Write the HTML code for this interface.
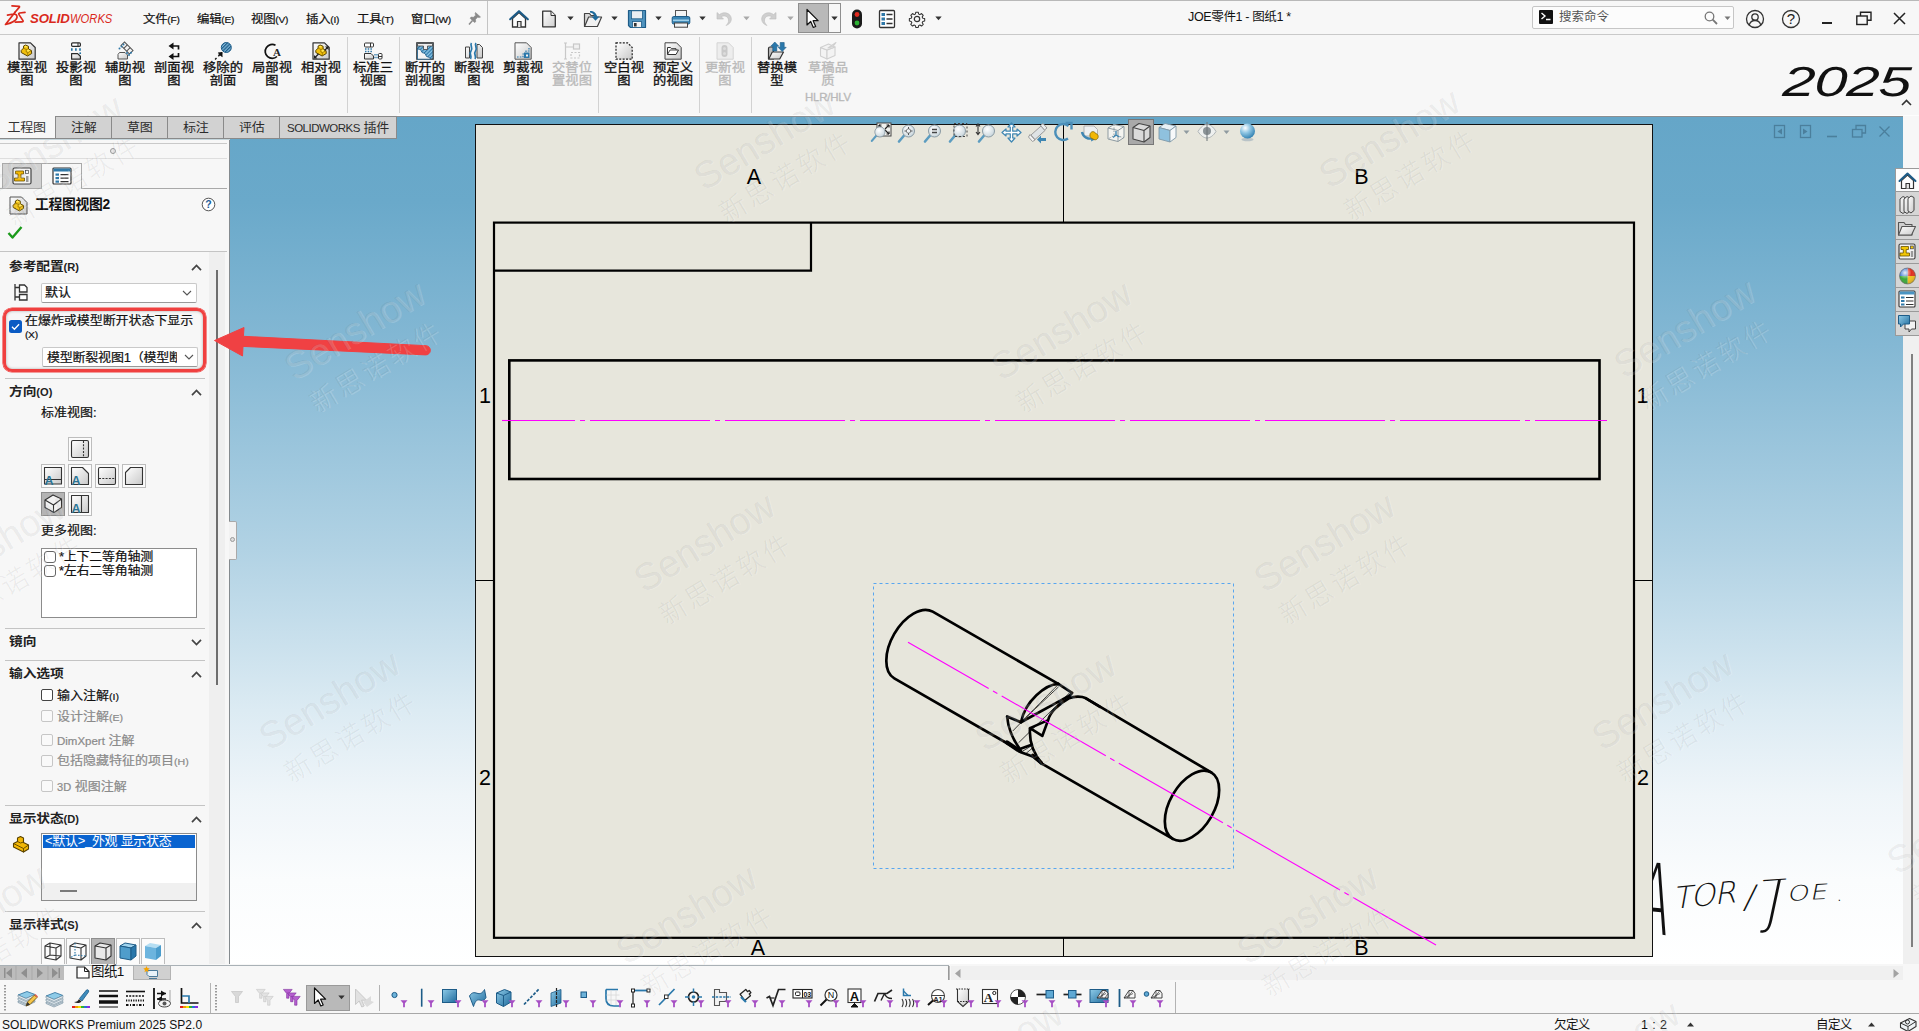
<!DOCTYPE html>
<html lang="zh-CN">
<head>
<meta charset="utf-8">
<title>JOE零件1 - 图纸1 *</title>
<style>
*{box-sizing:border-box;margin:0;padding:0}
html,body{width:1919px;height:1031px;overflow:hidden;background:#f7f7f7}
body{position:relative;font-family:"Liberation Sans","Noto Sans CJK SC",sans-serif;font-size:12px;color:#111;line-height:1}
.abs{position:absolute}
svg{display:block;overflow:visible}
svg.ico{position:absolute}
/* ---------- title bar ---------- */
#titlebar{position:absolute;left:0;top:0;width:1919px;height:35px;background:#f7f7f7;border-top:1px solid #b9b9b9;border-bottom:1px solid #c9c9c9}
#titlebar .menu{position:absolute;top:11px;font-size:11.6px;color:#111;white-space:nowrap;letter-spacing:-.25px;transform:scaleX(1.07);transform-origin:0 50%;margin-top:.5px;-webkit-text-stroke:.2px currentColor}
#titlebar .menu small{font-size:9.5px;letter-spacing:-.2px}
/* ---------- ribbon ---------- */
#ribbon{position:absolute;left:0;top:35px;width:1919px;height:82px;background:#f7f7f7}
.rb{position:absolute;top:27px;width:50px;text-align:center;font-size:12.2px;line-height:13px;color:#111;letter-spacing:0;white-space:nowrap;transform:scaleX(1.09);-webkit-text-stroke:.3px currentColor}
.rb.dis{color:#b9b9b9}
.rsep{position:absolute;top:2px;width:1px;height:76px;background:#d2d2d2}
/* ---------- cm tabs ---------- */
#tabs{position:absolute;left:0;top:116px;height:24px;width:1919px;z-index:5}
.tab{position:absolute;top:0;height:23px;border:1px solid #8a8a8a;border-left:none;background:#d2d2d2;font-size:13px;line-height:21px;text-align:center;color:#2b2b2b;letter-spacing:-.2px}
.tab.act{background:#f7f7f7;border:none;border-bottom:1px solid #8a8a8a;color:#333;line-height:23px;text-indent:-1px}
/* ---------- left panel ---------- */
#left{position:absolute;left:0;top:138px;width:230px;height:827px;background:#f7f7f7;border-right:1px solid #858b8f}
.sec{position:absolute;left:9px;font-size:12.4px;font-weight:bold;color:#222;letter-spacing:-.1px;white-space:nowrap;margin-top:-.5px;transform:scaleX(1.11);transform-origin:0 50%}
.sec small{font-size:10px;font-weight:bold;letter-spacing:0}
.hr{position:absolute;left:5px;width:200px;height:1px;background:#c4c4c4}
.chev{position:absolute;left:191px;width:11px;height:7px}
.lbl{position:absolute;font-size:12px;color:#111;white-space:nowrap;letter-spacing:0;transform:scaleX(1.083);transform-origin:0 50%;margin-top:.5px;-webkit-text-stroke:.2px currentColor}
.lbl.dis{color:#8a8a8a}
.cb{position:absolute;width:12px;height:12px;border:1px solid #444;border-radius:2px;background:#fff}
.cb.dis{border-color:#c6c6c6;background:#f9f9f9}
.sel{position:absolute;height:20px;background:#fff;border:1px solid #c9c9c9;border-bottom-color:#9a9a9a;border-radius:2px;font-size:12.5px;line-height:18px;padding-left:3px;white-space:nowrap;overflow:hidden;letter-spacing:-.3px}
.sx{display:inline-block;transform:scaleX(1.083);transform-origin:0 50%;font-size:12px;letter-spacing:0;-webkit-text-stroke:.2px currentColor}
.sxc{display:inline-block;transform:scaleX(1.083);transform-origin:50% 50%}
.vb{position:absolute;width:24px;height:24px;border:1px solid #bdbdbd;background:#fbfbfb}
.vb.on{background:#b4b4b4;border-color:#8e8e8e}
/* ---------- graphics ---------- */
#gfx{position:absolute;left:230px;top:117px;width:1673px;height:848px;background:linear-gradient(180deg,#65a6c8 0%,#6aa9ca 10%,#84b8d4 27%,#b1d2e4 51%,#dcebf3 70%,#eff5f9 80%,#fafcfd 90%,#ffffff 100%);overflow:hidden}
#sheet{position:absolute;left:0;top:0;width:1919px;height:1031px;pointer-events:none}
/* ---------- bottom ---------- */
#bottom{position:absolute;left:0;top:964px;width:1919px;height:67px;background:#f7f7f7}
#status{position:absolute;left:0;top:1013px;width:1919px;height:18px;border-top:1px solid #a8a8a8;background:#f7f7f7;font-size:12px}
.wm{position:absolute;white-space:nowrap;color:rgba(70,70,70,.085);transform:rotate(-31deg);transform-origin:0 34px;font-size:38px;line-height:34px;height:34px;pointer-events:none;font-weight:300;text-shadow:1px 1px 0 rgba(255,255,255,.18)}
.wm i{display:block;font-style:normal;font-size:27px;line-height:30px;padding-left:3px;letter-spacing:3px;margin-top:11px}
</style>
</head>
<body>
<!--TITLEBAR-->
<div id="titlebar">
  <!-- logo -->
  <svg class="ico" style="left:0;top:0" width="30" height="30" viewBox="0 0 30 30"><g fill="none" stroke="#da291c" stroke-width="1.700" stroke-linecap="round" stroke-linejoin="round"><path d="M12 4.800L19 5.300Q19.900 5.500 19.200 6.400L15 11.200"/><path d="M7.500 14.200L13.500 13Q17.400 13 17 16.500Q16 21 5.500 23.500L15 11.200"/><path d="M25 11.300L19.600 12Q18.200 12.400 19 13.600L23 19.600Q23.500 20.700 22 20.800L15.300 21.200"/></g></svg>
  <div class="abs" style="left:30px;top:11px;font-size:13.200px;font-style:italic;font-weight:bold;color:#da291c;white-space:nowrap;letter-spacing:-.1px">SOLID</div>
  <div class="abs" style="left:70px;top:11px;font-size:13.200px;font-style:italic;color:#da291c;white-space:nowrap;transform:scaleX(.85);transform-origin:0 0">WORKS</div>
  <div class="menu" style="left:143px">文件<small>(F)</small></div>
  <div class="menu" style="left:197px">编辑<small>(E)</small></div>
  <div class="menu" style="left:251px">视图<small>(V)</small></div>
  <div class="menu" style="left:306px">插入<small>(I)</small></div>
  <div class="menu" style="left:357px">工具<small>(T)</small></div>
  <div class="menu" style="left:411px">窗口<small>(W)</small></div>
  <!-- pin -->
  <svg class="ico" style="left:467px;top:9px" width="16" height="16" viewBox="0 0 16 16"><g fill="#8a8a8a" stroke="#8a8a8a" stroke-linejoin="round"><path d="M8.500 2.500l5 4.500-1.200.6-1.800-.4-2 2.300.2 2.300-1.200.7-4.300-4.200.8-1.200 2.400.2 2.200-2.100-.5-1.700z" stroke-width=".6"/><path d="M5.500 10.500l-3.500 4" stroke-width="1.500" fill="none"/></g></svg>
  <div class="abs" style="left:487px;top:0;width:1px;height:34px;background:#c4c4c4"></div>
  <!-- home -->
  <svg class="ico" style="left:509px;top:8px" width="20" height="20" viewBox="0 0 20 20"><path d="M3.500 9.500v8.500h13v-8.500l-6.500-6z" fill="#fdfdfd" stroke="#333" stroke-width="1.300"/><path d="M8.500 18v-5.500h3.500v5.500" fill="#e5e5e5" stroke="#333" stroke-width="1.200"/><path d="M1.200 10.200l8.800-8 8.800 8" fill="none" stroke="#1d5c88" stroke-width="2.200" stroke-linejoin="round" stroke-linecap="round"/></svg>
  <!-- new -->
  <svg class="ico" style="left:541px;top:8px" width="16" height="20" viewBox="0 0 16 20"><defs><linearGradient id="gdoc" x1="0" y1="0" x2="1" y2="1"><stop offset="0" stop-color="#fff"/><stop offset="1" stop-color="#cfcfcf"/></linearGradient></defs><path d="M1.700 2.200h8.300l4.300 4.300v11.300h-12.600z" fill="url(#gdoc)" stroke="#333" stroke-width="1.300" stroke-linejoin="round"/><path d="M10 2.200v4.300h4.300" fill="#eee" stroke="#333" stroke-width="1"/></svg>
  <svg class="ico" style="left:567px;top:15px" width="7" height="5" viewBox="0 0 7 5"><path d="M.3.500h6.400l-3.200 3.800z" fill="#333"/></svg>
  <!-- open -->
  <svg class="ico" style="left:583px;top:8px" width="21" height="20" viewBox="0 0 21 20"><path d="M1.500 4.500h5l1.500 2h5v11h-11.500z" fill="#d9d9d9" stroke="#444" stroke-width="1.200" stroke-linejoin="round"/><path d="M1.600 17.500l4-9.500h13l-4.200 9.500z" fill="#f1f1f1" stroke="#444" stroke-width="1.200" stroke-linejoin="round"/><path d="M7 2c4 0 6.500 2 6.800 5.500h2.700l-4 4.300-4-4.300h2.700c-.2-2-1.700-3.500-4.200-3.900z" fill="#1f6b9c"/></svg>
  <svg class="ico" style="left:611px;top:15px" width="7" height="5" viewBox="0 0 7 5"><path d="M.3.500h6.400l-3.200 3.800z" fill="#333"/></svg>
  <!-- save -->
  <svg class="ico" style="left:627px;top:8px" width="20" height="20" viewBox="0 0 20 20"><path d="M1.500 1.500h17v17h-15l-2-2z" fill="#4f93be" stroke="#1d5c88" stroke-width="1.200" stroke-linejoin="round"/><rect x="4.500" y="1.800" width="11" height="8" fill="#e9eef2" stroke="#1d5c88" stroke-width=".8"/><rect x="5.500" y="12.500" width="9" height="6" fill="#f2f2f2" stroke="#1d5c88" stroke-width=".8"/><rect x="7" y="14" width="2.600" height="3.500" fill="#333"/></svg>
  <svg class="ico" style="left:655px;top:15px" width="7" height="5" viewBox="0 0 7 5"><path d="M.3.500h6.400l-3.200 3.800z" fill="#333"/></svg>
  <!-- print -->
  <svg class="ico" style="left:671px;top:8px" width="20" height="20" viewBox="0 0 20 20"><rect x="4.500" y="1.500" width="11" height="7" fill="#f4f4f4" stroke="#555" stroke-width="1"/><rect x="1.200" y="7.500" width="17.600" height="7.500" rx="1.500" fill="#3c86b5" stroke="#1d5c88" stroke-width="1"/><rect x="2" y="10.500" width="16" height="1.600" fill="#9fd0ea"/><rect x="3.500" y="14" width="13" height="4.200" fill="#f4f4f4" stroke="#444" stroke-width="1"/></svg>
  <svg class="ico" style="left:699px;top:15px" width="7" height="5" viewBox="0 0 7 5"><path d="M.3.500h6.400l-3.200 3.800z" fill="#333"/></svg>
  <!-- undo -->
  <svg class="ico" style="left:715px;top:9px" width="19" height="18" viewBox="0 0 19 18"><path d="M2 2.500v6.500h6.500l-2.300-2.300c2.800-1.700 6.800-.6 7.300 3.200.3 2.200-.8 4.200-2.500 5.600 3.800-1.300 5.800-4.300 5.200-7.600-.9-5-7.300-6.800-11.800-3.300z" fill="#cfcfcf" stroke="#bdbdbd" stroke-width=".6"/></svg>
  <svg class="ico" style="left:743px;top:15px" width="7" height="5" viewBox="0 0 7 5"><path d="M.3.500h6.400l-3.200 3.800z" fill="#a9a9a9"/></svg>
  <!-- redo -->
  <svg class="ico" style="left:759px;top:9px" width="19" height="18" viewBox="0 0 19 18"><path transform="translate(19 0) scale(-1 1)" d="M2 2.500v6.500h6.500l-2.300-2.300c2.800-1.700 6.800-.6 7.300 3.200.3 2.200-.8 4.200-2.500 5.600 3.800-1.300 5.800-4.300 5.200-7.600-.9-5-7.300-6.800-11.800-3.300z" fill="#cfcfcf" stroke="#bdbdbd" stroke-width=".6"/></svg>
  <svg class="ico" style="left:787px;top:15px" width="7" height="5" viewBox="0 0 7 5"><path d="M.3.500h6.400l-3.200 3.800z" fill="#a9a9a9"/></svg>
  <!-- select -->
  <div class="abs" style="left:798px;top:2px;width:43px;height:30px;border:1px solid #8f8f8f;background:#f7f7f7"></div>
  <div class="abs" style="left:798px;top:2px;width:31px;height:30px;border:1px solid #8f8f8f;background:#b9b9b9"></div>
  <svg class="ico" style="left:805px;top:7px" width="16" height="21" viewBox="0 0 16 21"><path d="M2 1.500v15.500l3.700-3.500 2.600 6 2.400-1-2.600-5.800h5z" fill="#fff" stroke="#111" stroke-width="1.200" stroke-linejoin="round"/></svg>
  <svg class="ico" style="left:831px;top:15px" width="7" height="5" viewBox="0 0 7 5"><path d="M.3.500h6.400l-3.200 3.800z" fill="#333"/></svg>
  <!-- traffic light -->
  <svg class="ico" style="left:851px;top:8px" width="12" height="20" viewBox="0 0 12 20"><rect x="1" y=".5" width="10" height="19" rx="5" fill="#1b1b1b"/><circle cx="6" cy="5.500" r="2.400" fill="#e02a1f"/><circle cx="6" cy="14" r="2.400" fill="#2cb233"/></svg>
  <!-- options list -->
  <svg class="ico" style="left:878px;top:8px" width="18" height="20" viewBox="0 0 18 20"><rect x="1.500" y="1.500" width="15" height="17" rx="1" fill="#fff" stroke="#333" stroke-width="1.300"/><g fill="#2f78a8"><rect x="3.500" y="4" width="3.500" height="3"/><rect x="3.500" y="8.500" width="3.500" height="3"/><rect x="3.500" y="13" width="3.500" height="3"/></g><path d="M8.500 5.500h6M8.500 10h6M8.500 14.500h6" stroke="#333" stroke-width="1.300"/></svg>
  <!-- gear -->
  <svg class="ico" style="left:908px;top:9px" width="18" height="18" viewBox="0 0 18 18"><g fill="none" stroke="#333" stroke-width="1.200" stroke-linejoin="round"><path d="M7.600 1.200h2.800l.4 2.100 1.500.7 1.800-1.200 2 2-1.200 1.800.7 1.500 2.100.4v2.800l-2.100.4-.7 1.500 1.200 1.800-2 2-1.800-1.200-1.500.7-.4 2.100h-2.800l-.4-2.100-1.500-.7-1.800 1.200-2-2 1.200-1.800-.7-1.500-2.100-.4v-2.800l2.100-.4.7-1.500-1.200-1.800 2-2 1.800 1.200 1.500-.7z" transform="translate(1.100 1.100) scale(.88)"/><circle cx="9" cy="9" r="2.700"/></g></svg>
  <svg class="ico" style="left:935px;top:15px" width="7" height="5" viewBox="0 0 7 5"><path d="M.3.500h6.400l-3.200 3.800z" fill="#333"/></svg>
  <!-- doc title -->
  <div class="abs" style="left:1188px;top:10px;font-size:12.5px;white-space:nowrap;color:#111;letter-spacing:-.35px">JOE零件1 - 图纸1 *</div>
  <!-- search -->
  <div class="abs" style="left:1532px;top:5px;width:202px;height:23px;border:1px solid #c6c6c6;border-radius:2px;background:#fcfcfc"></div>
  <div class="abs" style="left:1539px;top:9px;width:14px;height:14px;background:#111;border-radius:1px"></div>
  <svg class="ico" style="left:1540px;top:10px" width="12" height="11" viewBox="0 0 12 11"><path d="M1.500 2l3.500 3-3.500 3M6 8.500h4.500" fill="none" stroke="#fff" stroke-width="1.400"/></svg>
  <div class="abs" style="left:1559px;top:10px;font-size:12.500px;color:#555;white-space:nowrap">搜索命令</div>
  <svg class="ico" style="left:1703px;top:9px" width="16" height="16" viewBox="0 0 16 16"><circle cx="6.500" cy="6.500" r="4.300" fill="none" stroke="#777" stroke-width="1.300"/><path d="M9.700 9.700l4.300 4.300" stroke="#777" stroke-width="1.800"/></svg>
  <svg class="ico" style="left:1724px;top:15px" width="7" height="5" viewBox="0 0 7 5"><path d="M.5.500h6l-3 3.500z" fill="#777"/></svg>
  <!-- user / help / window -->
  <svg class="ico" style="left:1745px;top:8px" width="20" height="20" viewBox="0 0 20 20"><g fill="none" stroke="#333" stroke-width="1.300"><circle cx="10" cy="10" r="8.500"/><circle cx="10" cy="8" r="3.200"/><path d="M4.200 16.200c.8-3 3-4.700 5.800-4.700s5 1.700 5.800 4.700"/></g></svg>
  <svg class="ico" style="left:1781px;top:8px" width="20" height="20" viewBox="0 0 20 20"><circle cx="10" cy="10" r="8.500" fill="none" stroke="#333" stroke-width="1.300"/><text x="10" y="15.300" font-size="15" font-family="'Liberation Sans',sans-serif" text-anchor="middle" fill="#222">?</text></svg>
  <div class="abs" style="left:1822px;top:21px;width:10px;height:2px;background:#222"></div>
  <svg class="ico" style="left:1856px;top:10px" width="16" height="15" viewBox="0 0 16 15"><g fill="none" stroke="#222" stroke-width="1.400"><path d="M4.500 5v-3.800h10.500v8h-3.800"/><rect x=".8" y="5" width="10.400" height="8.500"/></g></svg>
  <svg class="ico" style="left:1893px;top:11px" width="13" height="13" viewBox="0 0 13 13"><path d="M1 1l11 11M12 1l-11 11" stroke="#222" stroke-width="1.500"/></svg>
</div>
<!--/TITLEBAR-->
<!--RIBBON-->
<div id="ribbon">
  <svg width="0" height="0" style="position:absolute"><defs>
    <linearGradient id="gpg" x1="0" y1="0" x2="1" y2="1"><stop offset="0" stop-color="#ffffff"/><stop offset="1" stop-color="#c9c9c9"/></linearGradient>
    <linearGradient id="gbl" x1="0" y1="0" x2="1" y2="1"><stop offset="0" stop-color="#8ecbe8"/><stop offset="1" stop-color="#1f6b9c"/></linearGradient>
    <g id="ypart"><path d="M.3 5.800L2.600 3.400V1.400L4.600.300L7.600 1.600V4.300L10.500 5.800L10.800 8.800L6.600 11.300L.3 7.800z" fill="#f2c00c" stroke="#5a4500" stroke-width="1" stroke-linejoin="round"/><path d="M2.600 3.400L5.300 4.800L7.600 4.300M5.300 4.800V7.200L6.800 8L10.500 5.800M6.800 8V11" fill="none" stroke="#8a6a00" stroke-width=".7"/><path d="M3.200 1.700L4.600 1L6.800 2L5.300 2.800zM5.900 5.300L7.600 4.900L9.300 5.800L7 7.200z" fill="#ffe85a"/></g>
  </defs></svg>
  <!-- 1 模型视图 -->
  <svg class="ico" style="left:18px;top:7px" width="18" height="18" viewBox="0 0 18 18"><path d="M1 .8h11.500l4.700 4.700v11.700h-16.200z" fill="url(#gpg)" stroke="#333" stroke-width="1.200" stroke-linejoin="round"/><use href="#ypart" x="2.900" y="2.700"/></svg>
  <div class="rb" style="left:2px">模型视<br>图</div>
  <!-- 2 投影视图 -->
  <svg class="ico" style="left:67px;top:7px" width="18" height="18" viewBox="0 0 18 18"><rect x="4.600" y=".900" width="8.800" height="3.400" rx="1" fill="#fff" stroke="#2b2b2b" stroke-width="1.200"/><path d="M11 .900v3.400" stroke="#2b2b2b" stroke-width="1"/><path d="M4 7.500h10" stroke="#1f6f9f" stroke-width="2.600" stroke-dasharray="1.600 2.500"/><circle cx="13.200" cy="11.200" r=".9" fill="#1f6f9f"/><path d="M4.600 11.600h6l2.800 2.600v3h-8.800z" fill="url(#gpg)" stroke="#2b2b2b" stroke-width="1.200" stroke-linejoin="round"/></svg>
  <div class="rb" style="left:51px">投影视<br>图</div>
  <!-- 3 辅助视图 -->
  <svg class="ico" style="left:116px;top:7px" width="18" height="18" viewBox="0 0 18 18"><g transform="rotate(45 11 6)"><rect x="5" y="3.500" width="12" height="5" fill="#f3f3f3" stroke="#555" stroke-width="1"/><path d="M9 3.500v5M13 3.500v5" stroke="#555" stroke-width="1"/></g><path d="M2 12.500l1.500-2h5.500l2.500 2.500v4h-9.500z" fill="url(#gpg)" stroke="#555" stroke-width="1"/><g fill="#2f78a8"><circle cx="3.500" cy="6.500" r="1"/><circle cx="5.500" cy="4.500" r="1"/><circle cx="7.500" cy="2.500" r="1"/><circle cx="11" cy="11" r="1"/><circle cx="13" cy="13" r="1"/><circle cx="15" cy="10.800" r="1"/></g></svg>
  <div class="rb" style="left:100px">辅助视<br>图</div>
  <!-- 4 剖面视图 -->
  <svg class="ico" style="left:165px;top:7px" width="18" height="18" viewBox="0 0 18 18"><g fill="none" stroke="#111" stroke-width="1.700"><path d="M8 4h5.500v3.500M13.500 11v3.500h-5.500"/></g><path d="M3.500 4l5-3.500v7zM3.500 14.500l5-3.500v7z" fill="#111"/></svg>
  <div class="rb" style="left:149px">剖面视<br>图</div>
  <!-- 5 移除的剖面 -->
  <svg class="ico" style="left:214px;top:7px" width="18" height="18" viewBox="0 0 18 18"><defs><pattern id="hat" width="2.400" height="2.400" patternUnits="userSpaceOnUse" patternTransform="rotate(45)"><rect width="2.400" height="2.400" fill="#7fb6d8"/><rect width="1.200" height="2.400" fill="#1d5c88"/></pattern></defs><circle cx="12.300" cy="5.500" r="5" fill="url(#hat)" stroke="#1d5c88" stroke-width="1"/><path d="M7.500 11v4.500l-4.200-.3z" fill="#111" transform="rotate(-100 6 13)"/><path d="M8 10.500l-4 4M2.500 16l-1.500 1.500" stroke="#111" stroke-width="1.400" stroke-dasharray="2 1.200"/><path d="M8.500 10l-4.700.6 4.100 4.100z" fill="#111"/></svg>
  <div class="rb" style="left:198px">移除的<br>剖面</div>
  <!-- 6 局部视图 -->
  <svg class="ico" style="left:262px;top:7px" width="20" height="18" viewBox="0 0 20 18"><path d="M13.500 3.200a7 7 0 1 0 1.500 11.300" fill="none" stroke="#111" stroke-width="1.700"/><text x="15" y="13.500" font-family="'Liberation Serif',serif" font-size="11" font-weight="bold" text-anchor="middle" fill="#222">A</text></svg>
  <div class="rb" style="left:247px">局部视<br>图</div>
  <!-- 7 相对视图 -->
  <svg class="ico" style="left:312px;top:7px" width="18" height="18" viewBox="0 0 18 18"><path d="M1 .8h11.500l4.700 4.700v11.700h-16.200z" fill="url(#gpg)" stroke="#333" stroke-width="1.200" stroke-linejoin="round"/><use href="#ypart" x="3.500" y="2.700"/><path d="M2.500 16l4-4M16 5l-3.500 3.500" stroke="#222" stroke-width="1.200"/><path d="M2 16.500v-3.500l3.500 3.500zM16.500 4.500v3.500l-3.500-3.500z" fill="#222"/></svg>
  <div class="rb" style="left:296px">相对视<br>图</div>
  <div class="rsep" style="left:347px"></div>
  <!-- 8 标准三视图 -->
  <svg class="ico" style="left:363px;top:7px" width="20" height="18" viewBox="0 0 20 18"><rect x="1.500" y="1" width="9" height="4" rx="1" fill="#fff" stroke="#333" stroke-width="1"/><path d="M7.500 1v4" stroke="#333"/><path d="M2 7h8M2 9.500h8" stroke="#2f78a8" stroke-width="1.300" stroke-dasharray="1.500 1.200"/><path d="M1.500 11.500h6.500l2.500 2.500v3h-9z" fill="url(#gpg)" stroke="#333" stroke-width="1"/><path d="M12 12v5M14 12v5" stroke="#2f78a8" stroke-width="1.300" stroke-dasharray="1.500 1.200"/><rect x="15.500" y="11.500" width="3.500" height="5.500" rx="1" fill="#fff" stroke="#333" stroke-width="1"/><path d="M15.500 14.500h3.500" stroke="#333"/></svg>
  <div class="rb" style="left:348px">标准三<br>视图</div>
  <div class="rsep" style="left:399px"></div>
  <!-- 9 断开的剖视图 -->
  <svg class="ico" style="left:416px;top:7px" width="18" height="18" viewBox="0 0 18 18"><defs><pattern id="hat2" width="2.600" height="2.600" patternUnits="userSpaceOnUse" patternTransform="rotate(45)"><rect width="2.600" height="2.600" fill="#8cc6e6"/><rect width="1.200" height="2.600" fill="#2f78a8"/></pattern></defs><rect x=".8" y=".8" width="16.400" height="16.400" fill="url(#hat2)" stroke="#333" stroke-width="1.200"/><path d="M1.500 1.500h15v2.500h-5v3.500h-4v-3.500h-6z" fill="#eee" stroke="#444" stroke-width=".8"/><path d="M1.500 7l3 .5 1.500 3 3 1 1.500 3 3 1 1 1.700h-13z" fill="#f4f4f4" stroke="#1d5c88" stroke-width=".8"/></svg>
  <div class="rb" style="left:400px">断开的<br>剖视图</div>
  <!-- 10 断裂视图 -->
  <svg class="ico" style="left:464px;top:7px" width="20" height="18" viewBox="0 0 20 18"><path d="M1.500 5h4v11h-4zM13 2.500h2.500l3 3v10.500h-5.500z" fill="url(#gpg)" stroke="#444" stroke-width="1"/><path d="M7.500 1c-2 2.500 2 5-.5 8s1.500 5-.5 8M12 1c-2 2.500 2 5-.5 8s1.500 5-.5 8" fill="none" stroke="#2a78ab" stroke-width="1.700"/></svg>
  <div class="rb" style="left:449px">断裂视<br>图</div>
  <!-- 11 剪裁视图 -->
  <svg class="ico" style="left:514px;top:7px" width="18" height="18" viewBox="0 0 18 18"><path d="M1 .8h11.500l4.700 4.700v11.700h-16.200z" fill="url(#gpg)" stroke="#555" stroke-width="1"/><path d="M3 15h6v-3h3v-3h3v-3" fill="none" stroke="#2a78ab" stroke-width="1.200" stroke-dasharray="1.600 1.200"/><path d="M10 10.500h5.500v5.500h-5.500z" fill="#2a78ab"/><path d="M12 12.500h2v2h-2z" fill="#f4f4f4"/></svg>
  <div class="rb" style="left:498px">剪裁视<br>图</div>
  <!-- 12 交替位置视图 -->
  <svg class="ico" style="left:563px;top:7px" width="18" height="18" viewBox="0 0 18 18"><g fill="none" stroke="#c8c8c8" stroke-width="1.200"><path d="M2.500 1v16M1 1h3M1 17h3M2.500 5h8"/><rect x="10.500" y="2" width="6" height="5" fill="#f1f1f1"/><rect x="8" y="10.500" width="8.500" height="5.500" stroke-dasharray="2 1.500"/></g></svg>
  <div class="rb dis" style="left:547px">交替位<br>置视图</div>
  <div class="rsep" style="left:598px"></div>
  <!-- 13 空白视图 -->
  <svg class="ico" style="left:615px;top:7px" width="18" height="18" viewBox="0 0 18 18"><path d="M1 .8h11.500l4.700 4.700v11.700h-16.200z" fill="url(#gpg)" stroke="#222" stroke-width="1.200" stroke-dasharray="2 1.400"/></svg>
  <div class="rb" style="left:599px">空白视<br>图</div>
  <!-- 14 预定义的视图 -->
  <svg class="ico" style="left:664px;top:7px" width="18" height="18" viewBox="0 0 18 18"><path d="M1 .8h11.500l4.700 4.700v11.700h-16.200z" fill="url(#gpg)" stroke="#444" stroke-width="1"/><path d="M3.500 5.500h3l1 1.200h4.500v1.300h2.500l-2.500 4.500h-8.500z" fill="#fff" stroke="#333" stroke-width="1" stroke-linejoin="round"/><path d="M3.600 12.300l2.400-4.300h6" fill="none" stroke="#333" stroke-width=".9"/></svg>
  <div class="rb" style="left:648px">预定义<br>的视图</div>
  <div class="rsep" style="left:699px"></div>
  <!-- 15 更新视图 -->
  <svg class="ico" style="left:716px;top:7px" width="18" height="18" viewBox="0 0 18 18"><path d="M1 .8h11.500l4.700 4.700v11.700h-16.200z" fill="#ededed" stroke="#d4d4d4" stroke-width="1"/><rect x="5.500" y="3" width="6" height="12" rx="3" fill="#c9c9c9"/><circle cx="8.500" cy="6.500" r="1.500" fill="#dcdcdc"/><circle cx="8.500" cy="11.500" r="1.500" fill="#dcdcdc"/></svg>
  <div class="rb dis" style="left:700px">更新视<br>图</div>
  <div class="rsep" style="left:751px"></div>
  <!-- 16 替换模型 -->
  <svg class="ico" style="left:767px;top:7px" width="20" height="18" viewBox="0 0 20 18"><path d="M1.500 6.500c0-1 .5-1.500 1.500-1.500h3.500v12h-5z" fill="#bdbdbd" stroke="#333" stroke-width="1.200" stroke-linejoin="round"/><path d="M1.800 17l3.500-7h11.200l-3.800 7z" fill="url(#gpg)" stroke="#333" stroke-width="1.200" stroke-linejoin="round"/><path d="M7.800 0l4 4.200h-2v4.800h-4v-4.800h-2zM15.200 9.500l-4-4.200h2v-4.800h4v4.800h2z" fill="#2a78ab" stroke="#1d5c88" stroke-width=".6"/></svg>
  <div class="rb" style="left:752px">替换模<br>型</div>
  <!-- 17 草稿品质 -->
  <svg class="ico" style="left:819px;top:7px" width="18" height="18" viewBox="0 0 18 18"><g fill="#f3f3f3" stroke="#d0d0d0" stroke-width="1.100" stroke-linejoin="round"><path d="M1.500 5.500l6.500 2.500v9l-6.500-3z"/><path d="M8 8l8-3v8.500l-8 3.500z"/><path d="M1.500 5.500l8-3.500 6.500 3-8 3z"/><path d="M9 6l8-5.500-3 4z" fill="#e4e4e4"/></g></svg>
  <div class="rb dis" style="left:803px">草稿品<br>质<div style="font-size:10.500px;margin-top:3px;letter-spacing:-.2px;white-space:nowrap;margin-left:-4px;margin-right:-4px">HLR/HLV</div></div>
  <!-- 2025 -->
  <svg class="ico" style="left:1770px;top:20px" width="150" height="60" viewBox="0 0 150 60"><text x="0" y="0" font-family="'Liberation Sans',sans-serif" font-style="italic" font-size="42" fill="#111" transform="translate(12 40.500) skewX(-3) scale(1.4 1)" letter-spacing="-.5">2025</text></svg>
  <svg class="ico" style="left:1901px;top:64px" width="11" height="7" viewBox="0 0 11 7"><path d="M1 6l4.500-4.500l4.500 4.500" fill="none" stroke="#333" stroke-width="1.600"/></svg>
</div>
<!--/RIBBON-->
<!--TABS-->
<!--/LEFT-->
<!--GFX-->
<div id="gfx"></div>
<svg id="sheet" class="abs" width="1919" height="1031" viewBox="0 0 1919 1031">
  <!-- handwritten signature behind sheet -->
  <g fill="#111" font-family="'DejaVu Sans','Liberation Sans',sans-serif" font-weight="200">
    <text font-size="98" transform="translate(1630 932) rotate(5) skewX(-3) scale(.56 1)">A</text>
    <text font-size="30" transform="translate(1673 909) rotate(-6) skewX(-16) scale(1.05 1)" letter-spacing="-1">TOR</text>
    <text font-size="33" transform="translate(1743 908) rotate(2) skewX(-8)">/</text>
    <text font-size="60" transform="translate(1762 922) rotate(6) skewX(-6) scale(.95 1)">J</text>
    <text font-size="30" transform="translate(1761 889) rotate(-4) scale(1.9 1)">–</text>
    <text font-size="21" transform="translate(1787 901) rotate(-3) skewX(-14) scale(1.3 1)" letter-spacing="1">OE</text>
    <text font-size="21" transform="translate(1836 901)">.</text>
  </g>
  <!-- sheet -->
  <rect x="475.5" y="124.5" width="1177" height="832" fill="#e7e6dc" stroke="#111" stroke-width="1"/>
  <g fill="none" stroke="#000" stroke-width="2.2">
    <rect x="494" y="222.6" width="1140" height="715.2"/>
    <path d="M494 270.6H811V222.6"/>
  </g>
  <g stroke="#000" stroke-width="1">
    <path d="M1063.5 124V222M1063.5 938V956M475 580.5H494M1634 580.5H1652"/>
  </g>
  <g font-family="'Liberation Sans',sans-serif" font-size="21.500" fill="#000" text-anchor="middle">
    <text x="754" y="184">A</text><text x="1361.5" y="184">B</text>
    <text x="758" y="955">A</text><text x="1361.5" y="955">B</text>
    <text x="485" y="403">1</text><text x="1642.5" y="403">1</text>
    <text x="485" y="785">2</text><text x="1643" y="785">2</text>
  </g>
  <!-- view 1 -->
  <rect x="509.3" y="360.4" width="1090.2" height="118.6" fill="none" stroke="#000" stroke-width="2.6"/>
  <path d="M502 420.5H1607" stroke="#ff00ff" stroke-width="1.1" stroke-dasharray="120 5 5 5" stroke-dashoffset="47" fill="none"/>
  <!-- view 2 -->
  <rect x="873.5" y="583.5" width="360" height="285" fill="none" stroke="#58a6f0" stroke-width="1" stroke-dasharray="3 3"/>
  <g fill="none" stroke="#000" stroke-width="2.700" stroke-linecap="round" stroke-linejoin="round">
    <!-- left piece -->
    <path d="M1058.3 683.9L932.7 611.7A38.4 22.2 -60 0 0 894.3 678.3L1017 749"/>
    <!-- right piece -->
    <path d="M1086 698.4L1211.2 772.4M1042.3 763.9L1172.8 838.9"/>
    <ellipse cx="1192" cy="805.7" rx="38.4" ry="22.2" transform="rotate(-60 1192 805.7)"/>
  </g>
  <g transform="translate(990 670) scale(0.10669)" fill="none" stroke="#000" stroke-width="25" stroke-linecap="round" stroke-linejoin="round">
    <path d="M640 130L770 215L745 245"/>
    <path d="M640 130C520 135 330 290 290 490L160 435C170 540 220 660 280 740L390 700"/>
    <path d="M290 490L745 240"/>
    <path d="M1031 345L900 265C860 245 790 245 740 265C640 320 560 400 545 470L375 545L490 618L545 470"/>
    <path d="M375 545C365 680 420 800 490 880L400 810L290 770"/>
    <path d="M160 680L280 760" stroke-width="40"/>
    <path d="M400 800L480 870" stroke-width="34"/>
    <g stroke-width="7"><path d="M215 570L640 135M270 680L745 215M290 770L390 710M340 780L400 730M300 480L640 160"/></g>
  </g>
  <path d="M908 642.3L1436 945" stroke="#ff00ff" stroke-width="1.1" stroke-dasharray="120 5 5 5" stroke-dashoffset="27" fill="none"/>
</svg>
<!--/SHEET-->
<!--LEFT-->
<div id="tabs">
  <div class="tab act" style="left:0;width:55px"><span class="sxc" style="font-size:12px">工程图</span></div>
  <div class="abs" style="left:397px;top:0;width:1506px;height:1px;background:#8b8f92"></div><div class="abs" style="left:397px;top:-1px;width:1522px;height:1px;background:#fdfdfd"></div><div class="abs" style="left:0;top:23px;width:230px;height:1px;background:#c5d6dc"></div>
  <div class="tab" style="left:55px;width:57px;border-left:1px solid #8a8a8a"><span class="sxc" style="font-size:12px">注解</span></div>
  <div class="tab" style="left:112px;width:56px"><span class="sxc" style="font-size:12px">草图</span></div>
  <div class="tab" style="left:168px;width:56px"><span class="sxc" style="font-size:12px">标注</span></div>
  <div class="tab" style="left:224px;width:56px"><span class="sxc" style="font-size:12px">评估</span></div>
  <div class="tab" style="left:280px;width:117px;letter-spacing:-.2px"><span style="font-size:11.500px;letter-spacing:-.5px">SOLIDWORKS</span> 插件</div>
</div>
<div id="left">
  <svg width="0" height="0" style="position:absolute"><defs>
    <path id="chu" d="M1 6.200l4.500-4.700l4.500 4.700" fill="none" stroke="#444" stroke-width="1.700"/>
    <path id="chd" d="M1 .8l4.500 4.700l4.500-4.700" fill="none" stroke="#444" stroke-width="1.700"/>
  </defs></svg>
  <div class="abs" style="left:0;top:5px;width:227px;height:1px;background:#c9c9c9"></div><div class="abs" style="left:0;top:20px;width:227px;height:1px;background:#dedede"></div>
  <div class="abs" style="left:110px;top:10px;width:6px;height:6px;border:1px solid #999;border-radius:50%;background:#e8e8e8"></div>
  <!-- manager tabs -->
  <div class="abs" style="left:2px;top:25px;width:39px;height:26px;background:#d2d2d2;border:1px solid #a9a9a9;border-right:none"></div><div class="abs" style="left:0;top:50px;width:2px;height:1px;background:#a9a9a9"></div>
  <div class="abs" style="left:41px;top:25px;width:41px;height:26px;background:#f7f7f7;border:1px solid #a9a9a9;border-bottom:none"></div>
  <div class="abs" style="left:82px;top:50px;width:145px;height:1px;background:#a9a9a9"></div>
  <svg class="ico" style="left:12px;top:29px" width="20" height="18" viewBox="0 0 20 18"><rect x="1" y="1" width="18" height="16" rx="1.500" fill="#f4f4f4" stroke="#444" stroke-width="1.200"/><path d="M3.500 4h8v3h-2.500v4h3.500v3h-10v-3h3.500v-4h-2.500z" fill="#f2b705" stroke="#6b5200" stroke-width=".8"/><rect x="13.500" y="3.500" width="3" height="3" fill="#fff" stroke="#444" stroke-width=".8"/><rect x="14" y="9" width="2.500" height="6" fill="#9a9a9a"/></svg>
  <svg class="ico" style="left:52px;top:29px" width="20" height="18" viewBox="0 0 20 18"><rect x="1" y="1" width="18" height="16" rx="1" fill="#fff" stroke="#333" stroke-width="1.200"/><rect x="1.500" y="1.500" width="17" height="3" fill="#2f78a8"/><g fill="#2f78a8"><rect x="3.500" y="6.500" width="3.500" height="2.200"/><rect x="3.500" y="10" width="3.500" height="2.200"/><rect x="3.500" y="13.500" width="3.500" height="2.200"/></g><path d="M8.500 7.600h8M8.500 11.100h8M8.500 14.600h8" stroke="#333" stroke-width="1.200"/></svg>
  <!-- header -->
  <svg class="ico" style="left:9px;top:58px" width="19" height="19" viewBox="0 0 19 19"><path d="M1 1h11.500l5.500 5.500v11.500h-17z" fill="url(#gpg)" stroke="#555" stroke-width="1"/><use href="#ypart" x="3.800" y="3.600"/></svg>
  <div class="abs" style="left:35px;top:60px;font-size:13.800px;font-weight:bold;letter-spacing:-.3px;white-space:nowrap;color:#111">工程图视图2</div>
  <svg class="ico" style="left:201px;top:59px" width="15" height="15" viewBox="0 0 15 15"><circle cx="7.500" cy="7.500" r="6.300" fill="#fff" stroke="#555" stroke-width="1"/><text x="7.500" y="11.400" font-size="10.500" font-weight="bold" text-anchor="middle" fill="#1d5c9a" font-family="'Liberation Sans',sans-serif">?</text></svg>
  <svg class="ico" style="left:7px;top:87px" width="16" height="14" viewBox="0 0 16 14"><path d="M1.500 8l4 4.500l9-10.500" fill="none" stroke="#1b9a1b" stroke-width="2.400" stroke-linejoin="round"/></svg>
  <div class="abs" style="left:0;top:113px;width:227px;height:1px;background:#c4c4c4"></div>
  <!-- scrollbar -->
  <div class="abs" style="left:209px;top:114px;width:16px;height:713px;background:#efefef"></div>
  <div class="abs" style="left:216px;top:132px;width:2px;height:415px;background:#6e6e6e"></div>
  <!-- 参考配置 -->
  <div class="sec" style="top:123px">参考配置<small>(R)</small></div>
  <svg class="chev" style="top:126px" viewBox="0 0 11 7"><use href="#chu"/></svg>
  <svg class="ico" style="left:13px;top:145px" width="17" height="19" viewBox="0 0 17 19"><g fill="none" stroke="#333" stroke-width="1.300"><path d="M2 1v16.500M2 4.500h4M2 14h4"/><path d="M6.500 2h5l2.500 2.500v4.500h-7.500z" fill="#fff"/><path d="M6.500 11.500h7.500v5.500h-7.500z" fill="#fff"/></g></svg>
  <div class="sel" style="left:41px;top:145px;width:156px"><span class="sx">默认</span></div>
  <svg class="ico" style="left:182px;top:152px" width="10" height="6" viewBox="0 0 10 6"><path d="M1 1l4 4l4-4" fill="none" stroke="#555" stroke-width="1.100"/></svg>
  <!-- highlighted -->
  <div class="abs" style="left:9px;top:182px;width:13px;height:13px;border-radius:2.500px;background:#0a5bc4"></div>
  <svg class="ico" style="left:9px;top:182px" width="13" height="13" viewBox="0 0 13 13"><path d="M3 6.700l2.400 2.500l4.700-5" fill="none" stroke="#fff" stroke-width="1.300"/></svg>
  <div class="lbl" style="left:25px;top:176px;font-size:12px;letter-spacing:-.05px">在爆炸或模型断开状态下显示</div>
  <div class="lbl" style="left:25px;top:191px;font-size:9.500px;letter-spacing:-.3px">(X)</div>
  <div class="sel" style="left:42px;top:209px;width:156px;padding-left:4px;letter-spacing:-.25px;line-height:20px"><span class="sx" style="letter-spacing:-.2px">模型断裂视图1（模型断</span></div>
  <div class="abs" style="left:177px;top:210px;width:19px;height:17px;background:#fff"></div>
  <svg class="ico" style="left:184px;top:216px" width="10" height="6" viewBox="0 0 10 6"><path d="M1 1l4 4l4-4" fill="none" stroke="#555" stroke-width="1.100"/></svg>
  <div class="abs" style="left:3px;top:170px;width:203px;height:64px;border:3px solid #f0403f;border-radius:9px;box-shadow:0 0 0 .6px #f0403f,inset 0 0 3px rgba(0,0,0,.3)"></div>
  <div class="hr" style="top:240px"></div>
  <!-- 方向 -->
  <div class="sec" style="top:248px">方向<small>(O)</small></div>
  <svg class="chev" style="top:251px" viewBox="0 0 11 7"><use href="#chu"/></svg>
  <div class="lbl" style="left:41px;top:268px">标准视图:</div>
  <div class="vb" style="left:68px;top:299px"></div>
  <div class="vb" style="left:41px;top:326px"></div><div class="vb" style="left:68px;top:326px"></div><div class="vb" style="left:95px;top:326px"></div><div class="vb" style="left:122px;top:326px"></div>
  <div class="vb on" style="left:41px;top:354px"></div><div class="vb" style="left:68px;top:354px"></div>
  <svg class="ico" style="left:0;top:1px" width="230" height="400" viewBox="0 0 230 400"><g fill="url(#gpg)" stroke="#333" stroke-width="1.100" stroke-linejoin="round">
    <rect x="71.500" y="301.500" width="17" height="17" rx="1.500"/><path d="M83.500 302v16" stroke-dasharray="2 1.300" fill="none"/>
    <path d="M44.500 328.500h17v12h-17zM44.500 340.500h17v4.500h-17z" />
    <path d="M71.500 328.500h11l6 6v11h-17z"/>
    <rect x="98.500" y="328.500" width="17" height="17" rx="1.500"/><path d="M99 339.500h16" stroke-dasharray="2 1.300" fill="none"/>
    <path d="M125.500 333.500l5-5h12v17h-17z"/>
    <path d="M45 361l8-5 8.500 4v8.500l-7.500 5-9-5z" fill="#f2f2f2"/><path d="M45 361l8.500 5v7.500M53.500 366l8-6" fill="none"/>
    <path d="M71.500 356.500h10v17h-10zM81.500 356.500h7v17h-7z"/>
  </g>
  <g font-family="'Liberation Sans',sans-serif" font-size="12.500" font-weight="bold" fill="#2a7494"><text x="44.500" y="346">A</text><text x="71.500" y="345.800">A</text><text x="71.500" y="373.800">A</text></g></svg>
  <div class="lbl" style="left:41px;top:386px">更多视图:</div>
  <div class="abs" style="left:41px;top:410px;width:156px;height:70px;background:#fff;border:1px solid #8c8c8c"></div>
  <div class="cb" style="left:44px;top:413px;border-radius:3px;border-color:#666"></div>
  <div class="cb" style="left:44px;top:427px;border-radius:3px;border-color:#666"></div>
  <div class="lbl" style="left:59px;top:412px;font-size:12px;letter-spacing:-.23px">*上下二等角轴测</div>
  <div class="lbl" style="left:59px;top:426px;font-size:12px;letter-spacing:-.23px">*左右二等角轴测</div>
  <div class="hr" style="top:490px"></div>
  <div class="sec" style="top:498px">镜向</div>
  <svg class="chev" style="top:501px" viewBox="0 0 11 7"><use href="#chd"/></svg>
  <div class="hr" style="top:522px"></div>
  <!-- 输入选项 -->
  <div class="sec" style="top:530px">输入选项</div>
  <svg class="chev" style="top:533px" viewBox="0 0 11 7"><use href="#chu"/></svg>
  <div class="cb" style="left:41px;top:551px"></div><div class="lbl" style="left:57px;top:551px">输入注解<small style="font-size:9.800px">(I)</small></div>
  <div class="cb dis" style="left:41px;top:572px"></div><div class="lbl dis" style="left:57px;top:572px">设计注解<small style="font-size:9.800px">(E)</small></div>
  <div class="cb dis" style="left:41px;top:596px"></div><div class="lbl dis" style="left:57px;top:596px"><span style="font-size:10.600px;letter-spacing:0">DimXpert</span> 注解</div>
  <div class="cb dis" style="left:41px;top:617px"></div><div class="lbl dis" style="left:57px;top:616px">包括隐藏特征的项目<small style="font-size:9.800px">(H)</small></div>
  <div class="cb dis" style="left:41px;top:642px"></div><div class="lbl dis" style="left:57px;top:642px"><span style="font-size:10.200px">3D</span> 视图注解</div>
  <div class="hr" style="top:667px"></div>
  <!-- 显示状态 -->
  <div class="sec" style="top:675px">显示状态<small>(D)</small></div>
  <svg class="chev" style="top:678px" viewBox="0 0 11 7"><use href="#chu"/></svg>
  <svg class="ico" style="left:12px;top:697px" width="19" height="19" viewBox="0 0 19 19"><path d="M1.500 8.500l4-2v-3.500l3-1.500l3 1.500v4.500l5 2.500v4l-5 3-10-5z" fill="#f2b705" stroke="#5a4300" stroke-width="1.100" stroke-linejoin="round"/><path d="M1.500 8.500l10 5v4M11.500 13.500l5-3.500M5.500 6.500l3 1.500 3-1" fill="none" stroke="#5a4300" stroke-width=".9"/></svg>
  <div class="abs" style="left:41px;top:695px;width:156px;height:68px;background:#fff;border:1px solid #8c8c8c"></div>
  <div class="abs" style="left:43px;top:697px;width:152px;height:13px;background:#0a64d0;color:#fff;font-size:13px;line-height:12px;white-space:nowrap;letter-spacing:-.3px;padding-left:2px">&lt;默认&gt;_外观 显示状态</div>
  <div class="abs" style="left:42px;top:745px;width:154px;height:17px;background:#f0f0f0"></div>
  <div class="abs" style="left:60px;top:752px;width:17px;height:2px;background:#7a7a7a"></div>
  <div class="hr" style="top:773px"></div>
  <!-- 显示样式 -->
  <div class="sec" style="top:781px">显示样式<small>(S)</small></div>
  <svg class="chev" style="top:784px" viewBox="0 0 11 7"><use href="#chu"/></svg>
  <div class="vb" style="left:41px;top:800px;height:30px"></div><div class="vb" style="left:66px;top:800px;height:30px"></div><div class="vb on" style="left:91px;top:800px;height:30px"></div><div class="vb" style="left:116px;top:800px;height:30px"></div><div class="vb" style="left:141px;top:800px;height:30px"></div>
  <svg class="ico" style="left:0;top:795px" width="230" height="31" viewBox="0 795 230 31"><g fill="none" stroke="#333" stroke-width="1.100" stroke-linejoin="round">
    <path d="M45 808l5-3 11 2v11l-5 4-11-2zM45 808l11 2v12M56 810l5-3M50 805v12l-5 3M50 817l11 1"/>
    <path d="M70 808l5-3 11 2v11l-5 4-11-2zM70 808l11 2v12M81 810l5-3"/><path d="M75 805v12l-5 3M75 817l11 1" stroke-dasharray="1.500 1.500" stroke="#2f78a8"/>
    <path d="M95 808l5-3 11 2v11l-5 4-11-2z" fill="#e9e9e9"/><path d="M95 808l11 2v12M106 810l5-3"/>
  </g>
  <g stroke="#1d5c88" stroke-width="1" stroke-linejoin="round"><path d="M120 808l5-3 11 2-5 3z" fill="#9fd3ee"/><path d="M120 808l11 2v12l-11-2z" fill="#4f9dcb"/><path d="M131 810l5-3v11l-5 4z" fill="#2a78ab"/></g>
  <g><path d="M145 808l5-3 11 2-5 3z" fill="#b5def3"/><path d="M145 808l11 2v12l-11-2z" fill="#6cb4de"/><path d="M156 810l5-3v11l-5 4z" fill="#4a9ccc"/></g></svg>
</div>
<!-- splitter tab -->
<div class="abs" style="left:229px;top:521px;width:8px;height:39px;background:#f2f2f2;border:1px solid #a9a9a9;border-left:none;border-radius:0 2px 2px 0"></div>
<div class="abs" style="left:230px;top:537px;width:5px;height:5px;border:1px solid #999;border-radius:50%;background:#ddd"></div>
<!--/LEFT2-->
<!--RIGHT-->
<!-- head-up view toolbar -->
<svg class="abs" style="left:860px;top:118px" width="410" height="30" viewBox="860 118 410 30">
  <defs>
    <radialGradient id="glens" cx=".4" cy=".35" r=".7"><stop offset="0" stop-color="#ffffff"/><stop offset="1" stop-color="#c5d3da"/></radialGradient>
    <g id="mag"><path d="M6.500 11l-5.500 6.500" stroke="#5c9cc0" stroke-width="2.600" stroke-linecap="round"/><circle cx="10.500" cy="7" r="6" fill="url(#glens)" stroke="#8a9aa3" stroke-width="1"/></g>
  </defs>
  <g transform="translate(872 123)"><rect x="5" y="0" width="14" height="13" fill="#f2f2ee" stroke="#444" stroke-width="1"/><path d="M7 2l4 4M17 2l-4 4M17 11l-4-4" stroke="#222" stroke-width="1.200"/><path d="M7 2h2.500M7 2v2.500M17 2h-2.500M17 2v2.500M17 11h-2.500M17 11v-2.500" stroke="#222" stroke-width="1.200"/><g transform="translate(-1 3) scale(.85)"><use href="#mag"/></g></g>
  <g transform="translate(898 124)"><use href="#mag"/><path d="M10.500 3v8M6.500 7h8" stroke="#555" stroke-width="1" stroke-dasharray="2 4 2 0"/><circle cx="10.500" cy="7" r="2.200" fill="none" stroke="#666" stroke-width=".8"/></g>
  <g transform="translate(924 124)"><use href="#mag"/><path d="M8 5.500h5M8 8.500h5" stroke="#444" stroke-width="1.500"/></g>
  <g transform="translate(949 124)"><use href="#mag"/><rect x="5" y="-.5" width="13" height="13" fill="none" stroke="#444" stroke-width="1" stroke-dasharray="2 2"/></g>
  <g transform="translate(976 124)"><g transform="translate(2 0)"><use href="#mag"/></g><path d="M2 0v10M0 2.500l2-2.500 2 2.500M0 8l2 2.500 2-2.500" fill="none" stroke="#333" stroke-width="1.100"/></g>
  <g transform="translate(1002 123)" fill="#fff" stroke="#3f86b2" stroke-width="1.200" stroke-linejoin="round"><path d="M9.500 0l3.500 4h-2.300v4.200h4.300v-2.200l4 3.500-4 3.500v-2.200h-4.300v4.200h2.300l-3.500 4-3.500-4h2.300v-4.200h-4.300v2.200l-4-3.500 4-3.500v2.200h4.300v-4.200h-2.300z"/></g>
  <g transform="translate(1028 123)"><path d="M3 12l10-9 4 4.500-10 9z" fill="#dfe3e5" stroke="#9a9a9a" stroke-width="1"/><path d="M12.500 2.500l2.500-2 4 4.500-2.500 2z" fill="#eceeef" stroke="#9a9a9a" stroke-width="1"/><path d="M2 11.500l5 5.500-2.500 1.500-4-4.500z" fill="#f4f4f4" stroke="#9a9a9a" stroke-width="1"/><path d="M18 15h-5v-2.500l-4 4 4 4v-2.500h5z" fill="#3f86b2"/></g>
  <g transform="translate(1053 122)"><path d="M15 16.500a8 8 0 1 1 .5-12.500" fill="none" stroke="#4b8fb9" stroke-width="2.400"/><path d="M12.500 1h6v6.500" fill="none" stroke="#4b8fb9" stroke-width="2.400"/></g>
  <g transform="translate(1080 123)"><path d="M4 3h10l3.500 3.500v6.500h-13.500z" fill="#eef0f0" stroke="#aaa" stroke-width=".9"/><path d="M2 9c1 5 6 8 12 6" fill="none" stroke="#3f86b2" stroke-width="2.400"/><path d="M12 11l5 4.500-6 3z" fill="#3f86b2"/><g transform="translate(9 8) scale(.9)"><path d="M1 4.500c0-2.200 1.600-3.800 3.400-3.800 1.500 0 2.600.9 3 2.200 1.700.2 2.800 1.500 2.800 3.300 0 1.500-.8 2.700-2 3.200-1.200.6-2.600.3-3.600-.5-2-.3-3.600-2.100-3.600-4.400z" fill="#f2b705" stroke="#8a6a00" stroke-width=".9"/></g></g>
  <g transform="translate(1107 123)" fill="none" stroke="#8d9aa1" stroke-width="1" stroke-linejoin="round"><path d="M1 5l6-3.500 10 2v11l-6 4-10-2.500z" fill="#f4f4f0"/><path d="M1 5l10 2.500v11M11 7.500l6-4" /><path d="M7 1.500v11l-6 3.500M7 12.500l10 2" stroke-dasharray="1.500 1.500"/><path d="M9 8v4M9 12l-3 2.500M9 12l3.500 2" stroke="#3f86b2" stroke-width="1.400"/></g>
  <rect x="1128.500" y="119.500" width="25" height="25" fill="#a9a9a9" stroke="#777" stroke-width="1"/>
  <g transform="translate(1132 122)" fill="none" stroke="#444" stroke-width="1.100" stroke-linejoin="round"><path d="M1 5.500l6-4 11 2.500v11.500l-6 4.500-11-3z" fill="#dadada"/><path d="M1 5.500l11 3v11.500M12 8.500l6-4.500"/></g>
  <g transform="translate(1158 122)" stroke="#7f99a8" stroke-width=".9" stroke-linejoin="round"><path d="M1 5.500l6-4 11 2.500-6 4.500z" fill="#e8f1f6"/><path d="M1 5.500l11 3v11.500l-11-3z" fill="#8fc1de"/><path d="M12 8.500l6-4.500v11.500l-6 4.500z" fill="#f7f9fa"/></g>
  <path d="M1183.500 130.500h6l-3 3.500z" fill="#8f9aa0"/>
  <g transform="translate(1198 124)"><path d="M0 7.500c3-5 6-7 9-7s6 2 9 7c-3 4.500-6 6.500-9 6.500s-6-2-9-6.500z" fill="#eef0ef" stroke="#aeb4b6" stroke-width="1"/><circle cx="9" cy="7" r="4" fill="#8b9397"/><path d="M9 -2v19" stroke="#6c7478" stroke-width="1"/></g>
  <path d="M1223.500 130.500h6l-3 3.500z" fill="#8f9aa0"/>
  <g transform="translate(1239 123)"><defs><radialGradient id="gsph" cx=".35" cy=".3" r=".75"><stop offset="0" stop-color="#ffffff"/><stop offset=".45" stop-color="#8ec5e3"/><stop offset="1" stop-color="#2f7fb0"/></radialGradient></defs><ellipse cx="8.500" cy="16.500" rx="6" ry="1.800" fill="#b9c3c7"/><circle cx="8.500" cy="8" r="7.500" fill="url(#gsph)"/></g>
</svg>
<!-- mdi window controls -->
<svg class="abs" style="left:1770px;top:122px" width="125" height="20" viewBox="1770 122 125 20"><g fill="none" stroke="#4b7f9c" stroke-width="1.300">
  <rect x="1774.500" y="125.500" width="10" height="12"/><path d="M1782 128.500v6l-4.500-3z" fill="#4b7f9c" stroke="none"/>
  <rect x="1800.500" y="125.500" width="10" height="12"/><path d="M1803 128.500v6l4.500-3z" fill="#4b7f9c" stroke="none"/>
  <path d="M1827 136.500h10" stroke-width="1.600"/>
  <path d="M1856 129v-3.500h9.500v7.500h-3.500"/><rect x="1852.500" y="129.500" width="9.500" height="7.500"/>
  <path d="M1879.500 126.500l10 10M1889.500 126.500l-10 10"/></g>
</svg>
<!-- right strip + task pane -->
<div class="abs" style="left:1903px;top:116px;width:16px;height:849px;background:#f0f0f0"></div>
<div class="abs" style="left:1903px;top:116px;width:16px;height:52px;background:#f7f7f7"></div>
<div class="abs" style="left:1911px;top:354px;width:2px;height:593px;background:#808080"></div>
<div class="abs" style="left:1895px;top:168px;width:24px;height:168px;background:#d6d6d6;border-left:1px solid #9a9a9a;border-bottom:1px solid #9a9a9a;border-top:1px solid #9a9a9a"></div>
<div class="abs" style="left:1896px;top:169px;width:23px;height:22px;background:#fdfdfd"></div>
<svg class="abs" style="left:1895px;top:168px" width="24" height="168" viewBox="0 0 24 168">
  <path d="M0 23.500h24M0 47.500h24M0 71.500h24M0 95.500h24M0 119.500h24M0 143.500h24" stroke="#9a9a9a" stroke-width="1"/>
  <g transform="translate(3 3)"><path d="M3.500 9.500v8h12v-8l-6-5.500z" fill="#fdfdfd" stroke="#333" stroke-width="1.200"/><path d="M8 17.500v-5h3.500v5" fill="#e5e5e5" stroke="#333" stroke-width="1.100"/><path d="M1.500 10l8-7.500 8 7.500" fill="none" stroke="#1d5c88" stroke-width="2" stroke-linejoin="round" stroke-linecap="round"/></g>
  <g transform="translate(4 27)" fill="url(#gpg)" stroke="#444" stroke-width="1" stroke-linejoin="round"><path d="M1 4l3-2.500 3 1.500v13l-3 2.500-3-2z"/><path d="M5 4l3-2.500 3 1.500v13l-3 2.500-3-2z"/><path d="M9 3.500l3-2.500 3 1.500v13l-3 2.500-3-2z"/></g>
  <g transform="translate(2 52)"><path d="M1.500 2.500h5.500l1.500 2h6.500v10.500h-13.500z" fill="#d0d0d0" stroke="#555" stroke-width="1.100" stroke-linejoin="round"/><path d="M1.500 15l3.500-8.500h13.500l-4 8.500z" fill="url(#gpg)" stroke="#555" stroke-width="1.100" stroke-linejoin="round"/></g>
  <g transform="translate(3 75)"><rect x="1" y="1" width="16" height="15" rx="1.500" fill="#f4f4f4" stroke="#444" stroke-width="1.200"/><path d="M3 3.500h7.500v3h-2.300v3.500h3.300v3h-9.500v-3h3.300v-3.500h-2.300z" fill="#f2c705" stroke="#6b5200" stroke-width=".8"/><rect x="12.500" y="3" width="2.800" height="2.800" fill="#f2c705" stroke="#444" stroke-width=".7"/><rect x="12.800" y="8" width="2.400" height="6" fill="#9a9a9a"/></g>
  <g transform="translate(4 99)"><defs><radialGradient id="gball" cx=".35" cy=".3" r=".8"><stop offset="0" stop-color="#fff" stop-opacity=".9"/><stop offset=".5" stop-color="#fff" stop-opacity="0"/><stop offset="1" stop-color="#000" stop-opacity=".25"/></radialGradient></defs><path d="M8.500 9v-8a8 8 0 0 1 8 8z" fill="#e03020"/><path d="M8.500 9h8a8 8 0 0 1-8 8z" fill="#f0c020"/><path d="M8.500 9v8a8 8 0 0 1-8-8z" fill="#3aa83a"/><path d="M8.500 9h-8a8 8 0 0 1 8-8z" fill="#2f6fd0"/><circle cx="8.500" cy="9" r="8" fill="url(#gball)" stroke="#666" stroke-width=".6"/></g>
  <g transform="translate(3 122)"><rect x="1" y="1" width="16" height="16" rx="1" fill="#fff" stroke="#333" stroke-width="1.100"/><rect x="1.500" y="1.500" width="15" height="3" fill="#4a94c2"/><g fill="#2f78a8"><rect x="3" y="6.500" width="3.500" height="2"/><rect x="3" y="10" width="3.500" height="2"/><rect x="3" y="13.500" width="3.500" height="2"/></g><path d="M8 7.500h7.500M8 11h7.500M8 14.500h7.500" stroke="#333" stroke-width="1.100"/></g>
  <g transform="translate(2 146)"><path d="M8 7h10.500v8h-4l-2.500 3v-3h-4z" fill="#f2f2f2" stroke="#444" stroke-width="1" stroke-linejoin="round"/><path d="M1.500 1.500h11v8.500h-6l-3 3v-3h-2z" fill="url(#gbl)" stroke="#1d5c88" stroke-width="1" stroke-linejoin="round"/></g>
</svg>
<!-- red arrow annotation -->
<svg class="abs" style="left:210px;top:320px" width="230" height="50" viewBox="210 320 230 50"><path d="M214.500 340.500L244 327.500L243.400 336.300L426 345.700a4.600 4.600 0 0 1 -.5 9.200L243 346.400L242.500 356z" fill="#f04143" stroke="#f04143" stroke-width="1" stroke-linejoin="round"/></svg>
<!--/RIGHT-->
<!--BOTTOM-->
<div id="bottom">
  <div class="abs" style="left:0;top:1px;width:949px;height:1px;background:#a9b1b6"></div>
  <div class="abs" style="left:0;top:2px;width:64px;height:14px;background:#bcbcbc"></div>
  <svg class="ico" style="left:0;top:2px" width="64" height="14" viewBox="0 0 64 14"><g fill="#8f8f8f"><path d="M4 2h1.500v10h-1.500zM12 2v10l-6-5z"/><path d="M27 2v10l-6-5z"/><path d="M37 2v10l6-5z"/><path d="M52 2v10l6-5zM58.500 2h1.500v10h-1.500z"/></g><path d="M16 0v14M32 0v14M48 0v14" stroke="#a9a9a9" stroke-width="1"/></svg>
  <svg class="ico" style="left:76px;top:2px" width="14" height="13" viewBox="0 0 14 13"><path d="M1 1h7.500l4.500 4.500v6.500h-12z" fill="#fff" stroke="#222" stroke-width="1.200"/><path d="M8.500 1v4.500h4.500" fill="none" stroke="#222" stroke-width="1"/></svg>
  <div class="abs" style="left:91px;top:1px;font-size:13.500px;letter-spacing:-.6px;white-space:nowrap;color:#111">图纸1</div>
  <div class="abs" style="left:133px;top:2px;width:38px;height:14px;background:#d0d0d0;border:1px solid #b3b3b3;border-top:none"></div>
  <svg class="ico" style="left:143px;top:2px" width="16" height="13" viewBox="0 0 16 13"><path d="M4 4.500h10.500v6h-8.500l-2-2z" fill="#e9f2f8" stroke="#4c7a99" stroke-width="1"/><path d="M6 12.500h8" stroke="#4c7a99" stroke-width="1"/><path d="M3.500 0l.9 2.100 2.300.3-1.700 1.500.5 2.300-2-1.200-2 1.200.5-2.300-1.700-1.500 2.300-.3z" fill="#f5a300"/></svg>
  <div class="abs" style="left:948px;top:2px;width:2px;height:14px;border-left:1px solid #999;border-right:1px solid #bbb"></div>
  <div class="abs" style="left:951px;top:2px;width:952px;height:14px;background:#f0f0f0"></div>
  <svg class="ico" style="left:955px;top:5px" width="6" height="9" viewBox="0 0 6 9"><path d="M5.500 0v9l-5.500-4.500z" fill="#a3a3a3"/></svg>
  <svg class="ico" style="left:1893px;top:5px" width="6" height="9" viewBox="0 0 6 9"><path d="M.5 0v9l5.500-4.500z" fill="#a3a3a3"/></svg>
  <svg class="ico" style="left:4px;top:21px" width="2" height="26" viewBox="0 0 2 26"><g fill="#9a9a9a"><rect x="0" y="0" width="2" height="1.500"/><rect x="0" y="3" width="2" height="1.500"/><rect x="0" y="6" width="2" height="1.500"/><rect x="0" y="9" width="2" height="1.500"/><rect x="0" y="12" width="2" height="1.500"/><rect x="0" y="15" width="2" height="1.500"/><rect x="0" y="18" width="2" height="1.500"/><rect x="0" y="21" width="2" height="1.500"/><rect x="0" y="24" width="2" height="1.500"/></g></svg>
  <svg class="ico" style="left:215px;top:21px" width="2" height="26" viewBox="0 0 2 26"><g fill="#9a9a9a"><rect x="0" y="0" width="2" height="1.500"/><rect x="0" y="3" width="2" height="1.500"/><rect x="0" y="6" width="2" height="1.500"/><rect x="0" y="9" width="2" height="1.500"/><rect x="0" y="12" width="2" height="1.500"/><rect x="0" y="15" width="2" height="1.500"/><rect x="0" y="18" width="2" height="1.500"/><rect x="0" y="21" width="2" height="1.500"/><rect x="0" y="24" width="2" height="1.500"/></g></svg>
  <svg class="ico" style="left:17px;top:25px" width="22" height="20" viewBox="0 0 22 20"><path d="M1 6l9-3.500l8 3-9 4z" fill="#8ecbe8" stroke="#2a6f9c" stroke-width=".8"/><path d="M1 6v2l8 3.500 9-4v-2l-9 4z" fill="#e8eef2" stroke="#6a8799" stroke-width=".6"/><path d="M1 9l8 3.500 9-4v2l-9 4-8-3.500z" fill="#dfe7ec" stroke="#6a8799" stroke-width=".6"/><path d="M1 12l8 3.500 9-4v1.500l-9 4-8-3.500z" fill="#cfd9df" stroke="#6a8799" stroke-width=".6"/><path d="M9 17l1.500-4 7-7 2.500 2.500-7 7z" fill="#f6c64a" stroke="#6b4a00" stroke-width=".8"/><path d="M9 17l1.500-4 2.500 2.500z" fill="#333"/><path d="M17.500 6l2.500 2.500 1-1-2.500-2.500z" fill="#e05a4a"/></svg>
  <svg class="ico" style="left:45px;top:26px" width="20" height="18" viewBox="0 0 20 18"><path d="M1 6l9-3.500l8 3-9 4z" fill="#8ecbe8" stroke="#2a6f9c" stroke-width=".8"/><path d="M1 6v2l8 3.500 9-4v-2l-9 4z" fill="#e8eef2" stroke="#6a8799" stroke-width=".6"/><path d="M1 9l8 3.500 9-4v2l-9 4-8-3.500z" fill="#dfe7ec" stroke="#6a8799" stroke-width=".6"/><path d="M1 12l8 3.500 9-4v1.500l-9 4-8-3.500z" fill="#cfd9df" stroke="#6a8799" stroke-width=".6"/></svg>
  <svg class="ico" style="left:72px;top:24px" width="19" height="21" viewBox="0 0 19 21"><path d="M2 14c3 0 4-1 5-3l2.500 2.500c-2 2-5 2-7.500.5z" fill="#222"/><path d="M7.500 10.500l7-8.500c1-1 3 .5 2 2l-6.500 9z" fill="#3d8cbc" stroke="#1d5c88" stroke-width=".8"/><g transform="translate(0 18)"><g><rect x="0" y="0" width="3" height="2" fill="#e02020"/><rect x="3" y="0" width="3" height="2" fill="#f39a00"/><rect x="6" y="0" width="3" height="2" fill="#f2e200"/><rect x="9" y="0" width="3" height="2" fill="#2cb233"/><rect x="12" y="0" width="3" height="2" fill="#2a6fd6"/><rect x="15" y="0" width="3" height="2" fill="#8a2be2"/></g></g></svg>
  <svg class="ico" style="left:99px;top:25px" width="19" height="19" viewBox="0 0 19 19"><path d="M0 2h19" stroke="#111" stroke-width="1.500"/><path d="M0 7h19" stroke="#111" stroke-width="2.500"/><path d="M0 13h19" stroke="#111" stroke-width="3.500"/><path d="M0 18h19" stroke="#111" stroke-width="1"/></svg>
  <svg class="ico" style="left:126px;top:26px" width="19" height="17" viewBox="0 0 19 17"><path d="M0 1.500h19" stroke="#111" stroke-width="1.600"/><path d="M0 6h19" stroke="#111" stroke-width="1.600" stroke-dasharray="2 1.200"/><path d="M0 10.500h19" stroke="#111" stroke-width="1.800" stroke-dasharray="1.200 1.200"/><path d="M0 15h19" stroke="#111" stroke-width="1.800" stroke-dasharray="2.500 1.500 1 1.500"/></svg>
  <svg class="ico" style="left:152px;top:24px" width="20" height="21" viewBox="0 0 20 21"><path d="M2 0v21" stroke="#111" stroke-width="1.800"/><path d="M18 2v14" stroke="#bbb" stroke-width="1.400"/><path d="M5 5.500h9M5 11h9" stroke="#111" stroke-width="1.500"/><path d="M9 2.500l5 3-5 3zM10 8l-5 3 5 3z" fill="#111"/><ellipse cx="12.500" cy="15.500" rx="6" ry="3.500" fill="#f4f4f4" stroke="#444" stroke-width="1"/><circle cx="12.500" cy="15.500" r="2" fill="#555"/></svg>
  <svg class="ico" style="left:180px;top:24px" width="19" height="21" viewBox="0 0 19 21"><path d="M1.500 0v15h17" fill="none" stroke="#111" stroke-width="1.700"/><path d="M2 8h7v7" fill="none" stroke="#2a78ab" stroke-width="1.700"/><g transform="translate(0 18)"><g><rect x="0" y="0" width="3" height="2" fill="#e02020"/><rect x="3" y="0" width="3" height="2" fill="#f39a00"/><rect x="6" y="0" width="3" height="2" fill="#f2e200"/><rect x="9" y="0" width="3" height="2" fill="#2cb233"/><rect x="12" y="0" width="3" height="2" fill="#2a6fd6"/><rect x="15" y="0" width="3" height="2" fill="#8a2be2"/></g></g></svg>
  <div class="abs" style="left:210px;top:19px;width:1px;height:30px;background:#b3b3b3"></div>
  <svg class="ico" style="left:231px;top:27px" width="12" height="13" viewBox="0 0 12 13"><path d="M.5 .5h11l-4 5v6h-3v-6z" fill="#d9d9d9" stroke="#c4c4c4" stroke-width=".7" stroke-linejoin="round"/></svg>
  <svg class="ico" style="left:256px;top:25px" width="19" height="18" viewBox="0 0 19 18"><g transform="translate(0 0) scale(.8)"><path d="M.5 .5h11l-4 5v6h-3v-6z" fill="#e3e3e3" stroke="#c4c4c4" stroke-width=".7" stroke-linejoin="round"/></g><g transform="translate(4 3.500) scale(.8)"><path d="M.5 .5h11l-4 5v6h-3v-6z" fill="#e3e3e3" stroke="#c4c4c4" stroke-width=".7" stroke-linejoin="round"/></g><g transform="translate(8 7) scale(.8)"><path d="M.5 .5h11l-4 5v6h-3v-6z" fill="#e3e3e3" stroke="#c4c4c4" stroke-width=".7" stroke-linejoin="round"/></g></svg>
  <svg class="ico" style="left:283px;top:25px" width="19" height="18" viewBox="0 0 19 18"><g transform="translate(0 0) scale(.8)"><path d="M.5 .5h11l-4 5v6h-3v-6z" fill="#b65fd0" stroke="#7a2a96" stroke-width=".7" stroke-linejoin="round"/></g><g transform="translate(4 3.500) scale(.8)"><path d="M.5 .5h11l-4 5v6h-3v-6z" fill="#b65fd0" stroke="#7a2a96" stroke-width=".7" stroke-linejoin="round"/></g><g transform="translate(8 7) scale(.8)"><path d="M.5 .5h11l-4 5v6h-3v-6z" fill="#b65fd0" stroke="#7a2a96" stroke-width=".7" stroke-linejoin="round"/></g></svg>
  <div class="abs" style="left:306px;top:21px;width:44px;height:26px;background:#b9b9b9;border:1px solid #9a9a9a"></div>
  <svg class="ico" style="left:313px;top:23px" width="14" height="21" viewBox="0 0 14 21"><path d="M1.500 1v15.500l3.700-3.500 2.600 6 2.400-1-2.600-5.800h5z" fill="#fff" stroke="#111" stroke-width="1.200" stroke-linejoin="round"/></svg>
  <svg class="ico" style="left:338px;top:31px" width="7" height="5" viewBox="0 0 7 5"><path d="M.3.500h6.400l-3.200 3.800z" fill="#333"/></svg>
  <svg class="ico" style="left:354px;top:24px" width="20" height="21" viewBox="0 0 20 21"><path d="M1.500 1v15.500l3.700-3.500 2.600 6 2.400-1-2.600-5.800h5z" fill="#e1e1e1" stroke="#c9c9c9" stroke-width="1" stroke-linejoin="round"/><path d="M9 14l8-6v5l3 1-7 5z" fill="#dcdcdc"/></svg>
  <div class="abs" style="left:379px;top:21px;width:1px;height:26px;background:#b3b3b3"></div>
  <svg class="ico" style="left:387px;top:23px" width="21" height="21" viewBox="0 0 21 21"><circle cx="7.500" cy="8" r="2.600" fill="#6db3da" stroke="#1d5c88" stroke-width="1"/><path d="M13.500 13.200h7l-2.600 3v4h-1.800v-4z" fill="#a64fc4"/></svg>
  <svg class="ico" style="left:414px;top:23px" width="21" height="21" viewBox="0 0 21 21"><path d="M7.700 1.700v18" stroke="#1d5c88" stroke-width="1.600"/><path d="M13.500 13.200h7l-2.600 3v4h-1.800v-4z" fill="#a64fc4"/></svg>
  <svg class="ico" style="left:441px;top:23px" width="21" height="21" viewBox="0 0 21 21"><rect x="1.500" y="2.500" width="14" height="13" fill="url(#gbl)" stroke="#1d5c88" stroke-width="1"/><path d="M13.500 13.200h7l-2.600 3v4h-1.800v-4z" fill="#a64fc4"/></svg>
  <svg class="ico" style="left:468px;top:23px" width="21" height="21" viewBox="0 0 21 21"><path d="M1.500 9c3-5 6-3 8.500-2.500s4.500-.5 6.500-4l1.500 8c-2 4-4.500 3-6.500 2.500s-4 0-6 6.500z" fill="url(#gbl)" stroke="#1d5c88" stroke-width="1"/><path d="M13.500 13.200h7l-2.600 3v4h-1.800v-4z" fill="#a64fc4"/></svg>
  <svg class="ico" style="left:495px;top:23px" width="21" height="21" viewBox="0 0 21 21"><path d="M1.500 6l8-3.500l6.500 2.500v10l-7.500 4.500l-7-3.500z" fill="url(#gbl)" stroke="#1d5c88" stroke-width="1" stroke-linejoin="round"/><path d="M1.500 6l7 2.500v11M8.500 8.500l7.500-3.500" fill="none" stroke="#1d5c88" stroke-width="1"/><path d="M13.500 13.200h7l-2.600 3v4h-1.800v-4z" fill="#a64fc4"/></svg>
  <svg class="ico" style="left:522px;top:23px" width="21" height="21" viewBox="0 0 21 21"><path d="M2 17.500l15-15.500" stroke="#1d5c88" stroke-width="1.700" stroke-dasharray="3 1.500"/><path d="M13.500 13.200h7l-2.600 3v4h-1.800v-4z" fill="#a64fc4"/></svg>
  <svg class="ico" style="left:549px;top:23px" width="21" height="21" viewBox="0 0 21 21"><path d="M2 6l10-3.500v13.500l-10 3.500z" fill="url(#gbl)" stroke="#1d5c88" stroke-width=".8"/><path d="M7.500 1v19" stroke="#222" stroke-width="1.200" stroke-dasharray="3 1"/><path d="M13.500 13.200h7l-2.600 3v4h-1.800v-4z" fill="#a64fc4"/></svg>
  <svg class="ico" style="left:576px;top:23px" width="21" height="21" viewBox="0 0 21 21"><rect x="5" y="5" width="5.500" height="5.500" fill="#6db3da" stroke="#1d5c88" stroke-width="1"/><path d="M13.500 13.200h7l-2.600 3v4h-1.800v-4z" fill="#a64fc4"/></svg>
  <svg class="ico" style="left:603px;top:23px" width="21" height="21" viewBox="0 0 21 21"><path d="M3 2.500h12M3 2.500v9c0 5 3 7.500 8 7.500h5" fill="none" stroke="#2a78ab" stroke-width="1.700"/><path d="M8 3v15M13 3v15M3.500 8h13M3.500 13h13" stroke="#d8d8d8" stroke-width=".8"/><path d="M13.500 13.200h7l-2.600 3v4h-1.800v-4z" fill="#a64fc4"/></svg>
  <svg class="ico" style="left:630px;top:23px" width="21" height="21" viewBox="0 0 21 21"><path d="M3 3.500v15M3 3.500h16" fill="none" stroke="#222" stroke-width="1.200"/><path d="M4 3.500h14" stroke="#2a78ab" stroke-width="1.800"/><g fill="#fff" stroke="#222" stroke-width="1"><rect x="1.500" y="2" width="3" height="3"/><rect x="17" y="2" width="3" height="3"/><rect x="1.500" y="17" width="3" height="3"/></g><path d="M13.500 13.200h7l-2.600 3v4h-1.800v-4z" fill="#a64fc4"/></svg>
  <svg class="ico" style="left:657px;top:23px" width="21" height="21" viewBox="0 0 21 21"><path d="M2 18l15.500-16" stroke="#2a78ab" stroke-width="1.700"/><rect x="7.500" y="8" width="3.500" height="3.500" fill="#fff" stroke="#333" stroke-width="1"/><path d="M13.500 13.200h7l-2.600 3v4h-1.800v-4z" fill="#a64fc4"/></svg>
  <svg class="ico" style="left:684px;top:23px" width="21" height="21" viewBox="0 0 21 21"><circle cx="9.500" cy="10" r="5" fill="none" stroke="#222" stroke-width="1.700"/><circle cx="9.500" cy="10" r="1.800" fill="#2a78ab"/><path d="M9.500 1.500v4M9.500 14.500v4.500M1 10h4M14 10h4" stroke="#2a78ab" stroke-width="1.500"/><path d="M13.500 13.200h7l-2.600 3v4h-1.800v-4z" fill="#a64fc4"/></svg>
  <svg class="ico" style="left:711px;top:23px" width="21" height="21" viewBox="0 0 21 21"><path d="M3.500 2.500h5v3h7v9h-7v4h-5z" fill="#f2f2f2" stroke="#555" stroke-width="1.100"/><path d="M1 10h19" stroke="#2a78ab" stroke-width="1.300" stroke-dasharray="2.500 1.200"/><path d="M13.500 13.200h7l-2.600 3v4h-1.800v-4z" fill="#a64fc4"/></svg>
  <svg class="ico" style="left:738px;top:23px" width="21" height="21" viewBox="0 0 21 21"><path d="M2 8l5-5.500l2 2 1.500-1.500 2 2-1.500 1.500 1.500 1.500-5 5.500z" fill="#f4f4f4" stroke="#222" stroke-width="1.300" stroke-linejoin="round" transform="rotate(8 8 8)"/><path d="M3 10l5 5" stroke="#2a78ab" stroke-width="2.200"/><path d="M13.500 13.200h7l-2.600 3v4h-1.800v-4z" fill="#a64fc4"/></svg>
  <svg class="ico" style="left:765px;top:23px" width="21" height="21" viewBox="0 0 21 21"><path d="M1.500 11l3-1.500 3.500 9 5.500-16h7" fill="none" stroke="#222" stroke-width="1.700"/><path d="M5 11h4.500" stroke="#222" stroke-width="1.200"/><path d="M13.500 13.200h7l-2.600 3v4h-1.800v-4z" fill="#a64fc4"/></svg>
  <svg class="ico" style="left:792px;top:23px" width="21" height="21" viewBox="0 0 21 21"><rect x="1" y="2.500" width="19" height="8.500" fill="#fff" stroke="#222" stroke-width="1.100"/><path d="M10.500 2.500v8.500" stroke="#222"/><rect x="3.500" y="5" width="4.500" height="3.500" rx="1" fill="none" stroke="#222" stroke-width="1"/><text x="15.300" y="9.800" font-size="7" font-family="Liberation Sans,sans-serif" text-anchor="middle" fill="#111" font-weight="bold">03</text><path d="M13.500 13.200h7l-2.600 3v4h-1.800v-4z" fill="#a64fc4"/></svg>
  <svg class="ico" style="left:819px;top:23px" width="21" height="21" viewBox="0 0 21 21"><circle cx="12" cy="8" r="6" fill="#fff" stroke="#333" stroke-width="1.200"/><text x="12" y="11.300" font-size="9" font-family="Liberation Sans,sans-serif" text-anchor="middle" fill="#111">N</text><path d="M7.500 12.500l-6 6" stroke="#111" stroke-width="2"/><path d="M13.500 13.200h7l-2.600 3v4h-1.800v-4z" fill="#a64fc4"/></svg>
  <svg class="ico" style="left:846px;top:23px" width="21" height="21" viewBox="0 0 21 21"><rect x="2" y="2" width="13" height="13.500" fill="#fff" stroke="#333" stroke-width="1.100"/><text x="8.500" y="13.500" font-size="13" font-family="Liberation Sans,sans-serif" text-anchor="middle" fill="#111" font-weight="bold">A</text><path d="M8.500 15.500v2M5 20h7l-3.500-3.500z" fill="#111" stroke="#111" stroke-width="1"/><path d="M13.500 13.200h7l-2.600 3v4h-1.800v-4z" fill="#a64fc4"/></svg>
  <svg class="ico" style="left:873px;top:23px" width="21" height="21" viewBox="0 0 21 21"><path d="M1.500 14.500l3.500-8h9l5-3.500" fill="none" stroke="#222" stroke-width="1.700"/><path d="M8 13.500l3.500-7M11.500 6.500c1 3 3.500 5 7.500 5" fill="none" stroke="#222" stroke-width="1.400"/><path d="M13.500 13.200h7l-2.600 3v4h-1.800v-4z" fill="#a64fc4"/></svg>
  <svg class="ico" style="left:900px;top:23px" width="21" height="21" viewBox="0 0 21 21"><path d="M3.500 1.500v7h7.500" fill="none" stroke="#2a78ab" stroke-width="1.500"/><path d="M3.500 4l4.500 4.500" stroke="#2a78ab" stroke-width="1.200"/><path d="M2 12c1.500 2.500 1.500 5.500 0 8M5.500 12c1.500 2.500 1.500 5.500 0 8M9 12c1.500 2.500 1.500 5.500 0 8M12.500 12c1.500 2.500 1.500 5.500 0 8" fill="none" stroke="#333" stroke-width="1.100"/><path d="M13.500 13.200h7l-2.600 3v4h-1.800v-4z" fill="#a64fc4"/></svg>
  <svg class="ico" style="left:927px;top:23px" width="21" height="21" viewBox="0 0 21 21"><circle cx="11" cy="9" r="6.500" fill="#fff" stroke="#444" stroke-width="1.100"/><path d="M4.500 8.500h13" stroke="#444" stroke-width="1"/><text x="11" y="14.800" font-size="7.500" font-family="Liberation Sans,sans-serif" text-anchor="middle" fill="#222" font-weight="bold">A1</text><path d="M6 13.500l-5 4.500" stroke="#111" stroke-width="2"/><path d="M13.500 13.200h7l-2.600 3v4h-1.800v-4z" fill="#a64fc4"/></svg>
  <svg class="ico" style="left:954px;top:23px" width="21" height="21" viewBox="0 0 21 21"><path d="M3.500 2v12.500l5.500 5 5.500-5v-12.500" fill="url(#gpg)" stroke="#333" stroke-width="1.100"/><path d="M2 2h14M3.500 14.500h11" stroke="#222" stroke-width="1.100" stroke-dasharray="1.500 1.200"/><path d="M13.500 13.200h7l-2.600 3v4h-1.800v-4z" fill="#a64fc4"/></svg>
  <svg class="ico" style="left:981px;top:23px" width="21" height="21" viewBox="0 0 21 21"><rect x="1.500" y="2.500" width="15" height="14" fill="#fff" stroke="#333" stroke-width="1.100"/><text x="7.500" y="15" font-size="13" font-family="Liberation Serif,serif" text-anchor="middle" fill="#222" font-weight="bold">A</text><circle cx="13.300" cy="6" r="1.600" fill="none" stroke="#222" stroke-width="1"/><path d="M13.500 13.200h7l-2.600 3v4h-1.800v-4z" fill="#a64fc4"/></svg>
  <svg class="ico" style="left:1008px;top:23px" width="21" height="21" viewBox="0 0 21 21"><circle cx="10" cy="10" r="7.500" fill="#fff" stroke="#555" stroke-width="1"/><path d="M10 2.500a7.500 7.500 0 0 1 7.500 7.500h-7.500zM10 17.500a7.500 7.500 0 0 1-7.500-7.500h7.500z" fill="#222"/><path d="M13.500 13.200h7l-2.600 3v4h-1.800v-4z" fill="#a64fc4"/></svg>
  <svg class="ico" style="left:1035px;top:23px" width="21" height="21" viewBox="0 0 21 21"><path d="M1.500 7.500h10" stroke="#222" stroke-width="1.700"/><rect x="11" y="3.500" width="7.500" height="7.500" fill="#5fa9d4" stroke="#1d5c88" stroke-width="1"/><path d="M13.500 13.200h7l-2.600 3v4h-1.800v-4z" fill="#a64fc4"/></svg>
  <svg class="ico" style="left:1062px;top:23px" width="21" height="21" viewBox="0 0 21 21"><path d="M1.500 7.500h18" stroke="#222" stroke-width="1.700"/><rect x="6.500" y="3.500" width="7.500" height="7.500" fill="#5fa9d4" stroke="#1d5c88" stroke-width="1"/><path d="M13.500 13.200h7l-2.600 3v4h-1.800v-4z" fill="#a64fc4"/></svg>
  <svg class="ico" style="left:1089px;top:23px" width="21" height="21" viewBox="0 0 21 21"><rect x="1" y="2.500" width="18" height="13" fill="url(#gbl)" stroke="#1d5c88" stroke-width="1"/><path d="M8 11l5-7.500h4l2 3v4.500z" fill="#f6f6f6" stroke="#333" stroke-width=".9"/><path d="M8 11l9-4.500M13 3.500v7.500M17 3.500l-6 7.500M19 6.500l-3 4.500" stroke="#333" stroke-width=".7" fill="none"/><path d="M13.500 13.200h7l-2.600 3v4h-1.800v-4z" fill="#a64fc4"/></svg>
  <svg class="ico" style="left:1116px;top:23px" width="21" height="21" viewBox="0 0 21 21"><path d="M3.500 2v18" stroke="#1d5c88" stroke-width="1.800"/><path d="M8 11l5-7.500h4l2 3v4.500z" fill="#f6f6f6" stroke="#333" stroke-width=".9"/><path d="M8 11l9-4.500M13 3.500v7.500M17 3.500l-6 7.500" stroke="#333" stroke-width=".7" fill="none"/><path d="M13.500 13.200h7l-2.600 3v4h-1.800v-4z" fill="#a64fc4"/></svg>
  <svg class="ico" style="left:1143px;top:23px" width="21" height="21" viewBox="0 0 21 21"><circle cx="3.500" cy="7" r="2.300" fill="#5fa9d4" stroke="#1d5c88" stroke-width="1"/><path d="M8 11l5-7.500h4l2 3v4.500z" fill="#f6f6f6" stroke="#333" stroke-width=".9"/><path d="M8 11l9-4.500M13 3.500v7.500M17 3.500l-6 7.500" stroke="#333" stroke-width=".7" fill="none"/><path d="M13.500 13.200h7l-2.600 3v4h-1.800v-4z" fill="#a64fc4"/></svg>
  <div class="abs" style="left:1175px;top:18px;width:1px;height:31px;background:#b3b3b3"></div>
</div>
<div id="status">
  <div class="abs" style="left:2px;top:5px;font-size:12px;white-space:nowrap;color:#111;letter-spacing:.05px">SOLIDWORKS Premium 2025 SP2.0</div>
  <div class="abs" style="left:1554px;top:5px;font-size:12.500px;white-space:nowrap;letter-spacing:-.6px">欠定义</div>
  <div class="abs" style="left:1641px;top:5px;font-size:12.500px;white-space:nowrap;letter-spacing:.4px">1 : 2</div>
  <svg class="ico" style="left:1687px;top:8px" width="7" height="5" viewBox="0 0 7 5"><path d="M0 4.500h7l-3.500-4z" fill="#333"/></svg>
  <div class="abs" style="left:1816px;top:5px;font-size:12.500px;white-space:nowrap;letter-spacing:-.6px">自定义</div>
  <svg class="ico" style="left:1868px;top:8px" width="7" height="5" viewBox="0 0 7 5"><path d="M0 4.500h7l-3.500-4z" fill="#333"/></svg>
  <svg class="ico" style="left:1899px;top:3px" width="18" height="15" viewBox="0 0 18 15"><path d="M1.500 6l9-4.500 6.500 3v5l-8 5-7.500-4z" fill="#eef3f6" stroke="#333" stroke-width="1.100" stroke-linejoin="round"/><path d="M1.500 6l7.500 3.500 8-5M9 9.500v5" fill="none" stroke="#333" stroke-width="1"/><circle cx="8.500" cy="5" r="2" fill="none" stroke="#333" stroke-width="1"/></svg>
</div>
<!--/BOTTOM-->
<!--WM-->
<div class="wm" style="left:-6px;top:165px">Senshow<i>新思诺软件</i></div>
<div class="wm" style="left:706px;top:161px">Senshow<i>新思诺软件</i></div>
<div class="wm" style="left:1331px;top:159px">Senshow<i>新思诺软件</i></div>
<div class="wm" style="left:296px;top:351px">Senshow<i>新思诺软件</i></div>
<div class="wm" style="left:1003px;top:351px">Senshow<i>新思诺软件</i></div>
<div class="wm" style="left:1626px;top:349px">Senshow<i>新思诺软件</i></div>
<div class="wm" style="left:-64px;top:565px">Senshow<i>新思诺软件</i></div>
<div class="wm" style="left:646px;top:563px">Senshow<i>新思诺软件</i></div>
<div class="wm" style="left:1266px;top:563px">Senshow<i>新思诺软件</i></div>
<div class="wm" style="left:271px;top:721px">Senshow<i>新思诺软件</i></div>
<div class="wm" style="left:987px;top:722px">Senshow<i>新思诺软件</i></div>
<div class="wm" style="left:1604px;top:721px">Senshow<i>新思诺软件</i></div>
<div class="wm" style="left:-82px;top:935px">Senshow<i>新思诺软件</i></div>
<div class="wm" style="left:628px;top:935px">Senshow<i>新思诺软件</i></div>
<div class="wm" style="left:1249px;top:935px">Senshow<i>新思诺软件</i></div>
<div class="wm" style="left:1899px;top:845px">Senshow<i>新思诺软件</i></div>
<div class="wm" style="left:934px;top:1071px">Senshow<i>新思诺软件</i></div>
<div class="wm" style="left:1551px;top:1071px">Senshow<i>新思诺软件</i></div>
<!--/WM-->
</body>
</html>
